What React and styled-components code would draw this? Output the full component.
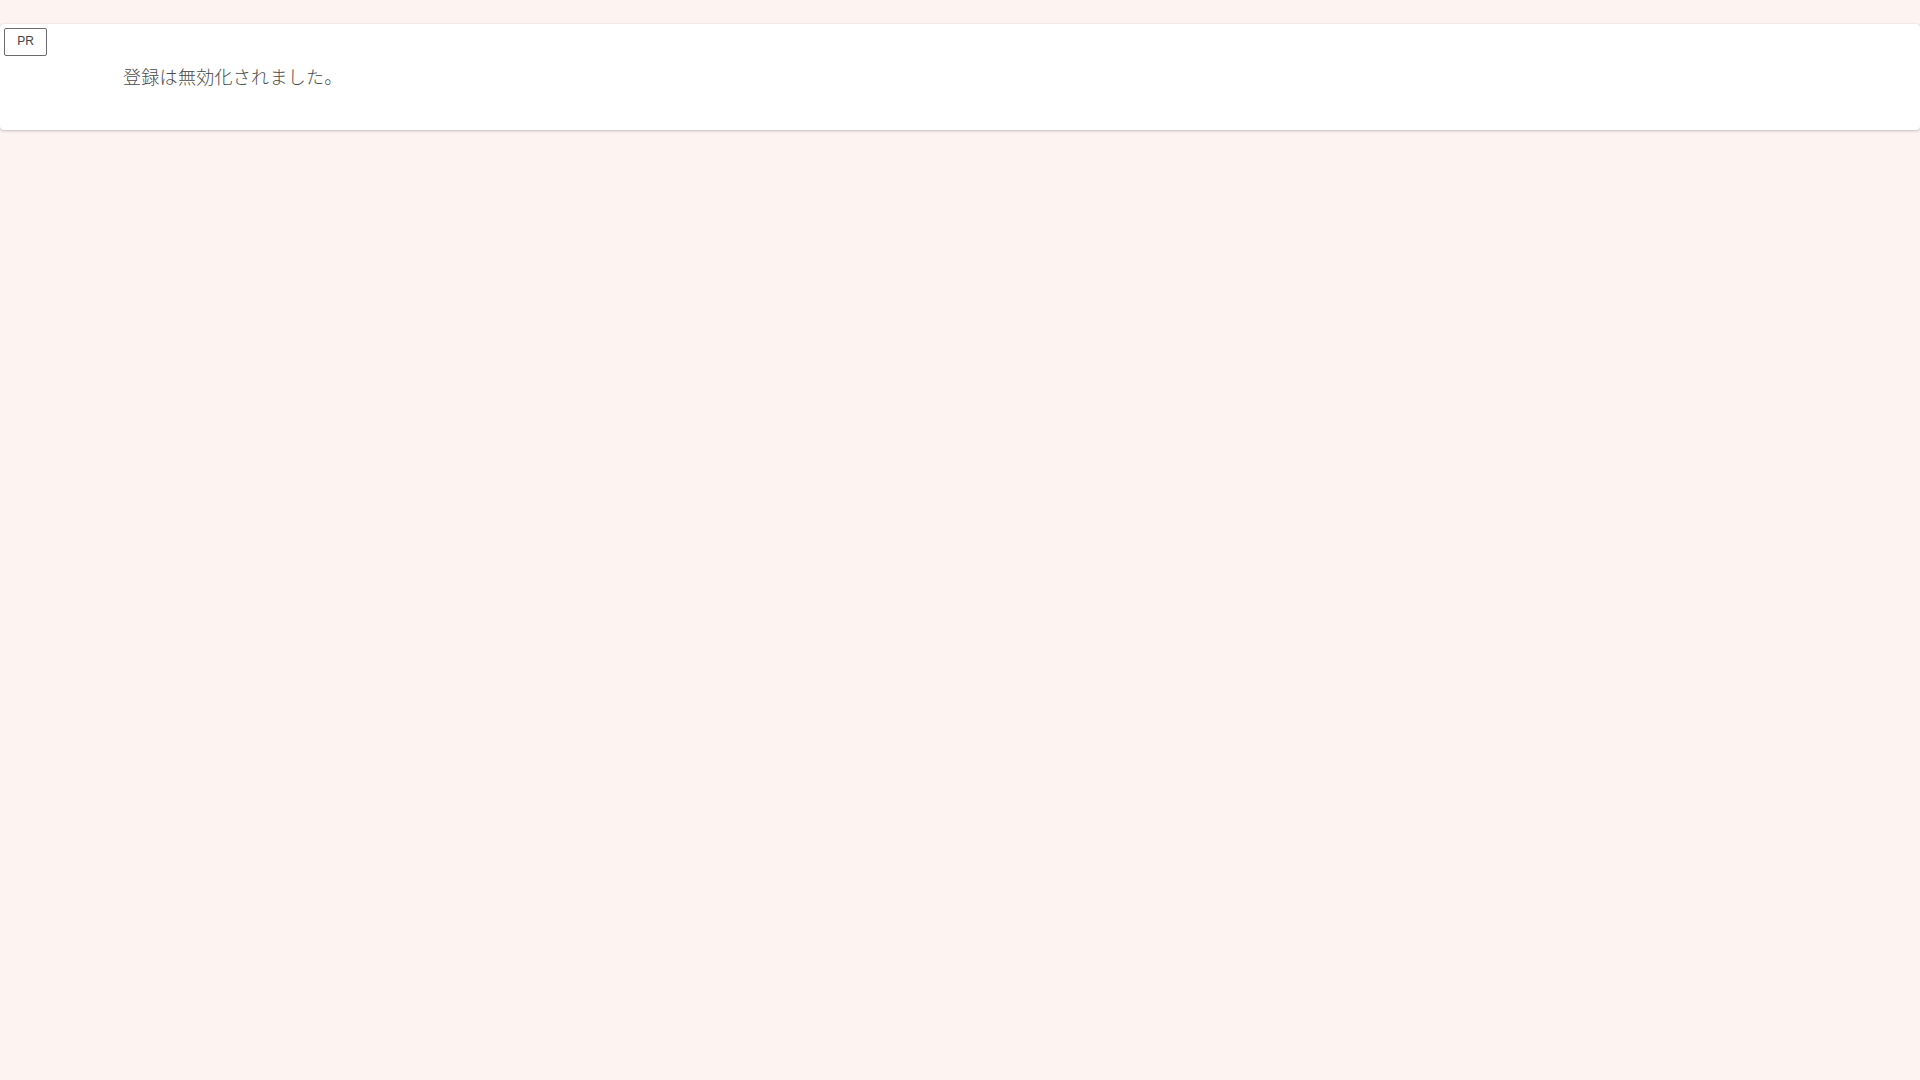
import React from 'react';
import styled, { createGlobalStyle } from 'styled-components';

const GlobalStyle = createGlobalStyle`
  html, body {
    margin: 0;
    padding: 0;
    background: #fdf3f1;
    font-family: "Noto Sans CJK JP", "Noto Sans", sans-serif;
  }
  #root {
    min-height: 100vh;
  }
`;

const Page = styled.main`
  padding-top: 24px;
`;

const Card = styled.section`
  display: flex;
  flex-direction: column;
  align-items: flex-start;
  background: #ffffff;
  border-radius: 4px;
  box-shadow: 0 1px 3px rgba(0, 0, 0, 0.22), 0 0 1px rgba(0, 0, 0, 0.12);
  padding: 4px 2px 40px 4px;
`;

const Badge = styled.span`
  display: flex;
  align-items: center;
  justify-content: center;
  box-sizing: border-box;
  width: 43px;
  height: 28px;
  padding-bottom: 2px;
  border: 1px solid #6b6b6b;
  border-radius: 2px;
  font-family: "Liberation Sans", Arial, sans-serif;
  font-size: 12px;
  color: #444;
`;

const Message = styled.p`
  margin: 6px 0 0 119px;
  font-size: 18px;
  font-weight: 300;
  line-height: 28px;
  letter-spacing: 0.3px;
  color: #4a4a4a;
`;

export default function App() {
  return (
    <>
      <GlobalStyle />
      <Page>
        <Card>
          <Badge>PR</Badge>
          <Message>登録は無効化されました。</Message>
        </Card>
      </Page>
    </>
  );
}
